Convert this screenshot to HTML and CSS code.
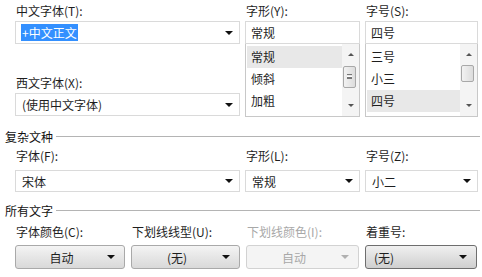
FILE: index.html
```html
<!DOCTYPE html>
<html lang="zh-CN">
<head>
  <meta charset="utf-8">
  <title>字体</title>
  <link rel="stylesheet" href="styles.css">
</head>
<body>
  <div class="dlg">
    <div class="top">
      <div class="col">
        <div class="lbl">中文字体(T):</div>
        <div class="combo"><span class="sel">+中文正文</span><i class="arr"></i></div>
        <div class="lbl gap">西文字体(X):</div>
        <div class="combo"><span>(使用中文字体)</span><i class="arr"></i></div>
      </div>
      <div class="col">
        <div class="lbl">字形(Y):</div>
        <div class="text">常规</div>
        <div class="list">
          <div class="items">
            <div class="item on">常规</div>
            <div class="item">倾斜</div>
            <div class="item">加粗</div>
          </div>
          <div class="sbar">
            <i class="up"></i>
            <div class="thumb t1"><b></b></div>
            <i class="dn"></i>
          </div>
        </div>
      </div>
      <div class="col">
        <div class="lbl">字号(S):</div>
        <div class="text">四号</div>
        <div class="list">
          <div class="items">
            <div class="item">三号</div>
            <div class="item">小三</div>
            <div class="item on">四号</div>
          </div>
          <div class="sbar">
            <i class="up"></i>
            <div class="thumb t2"></div>
            <i class="dn"></i>
          </div>
        </div>
      </div>
    </div>

    <div class="sect">复杂文种</div>
    <div class="row">
      <div class="col">
        <div class="lbl">字体(F):</div>
        <div class="combo short"><span>宋体</span><i class="arr"></i></div>
      </div>
      <div class="col">
        <div class="lbl">字形(L):</div>
        <div class="combo short"><span>常规</span><i class="arr"></i></div>
      </div>
      <div class="col">
        <div class="lbl">字号(Z):</div>
        <div class="combo short"><span>小二</span><i class="arr"></i></div>
      </div>
    </div>

    <div class="sect s2">所有文字</div>
    <div class="btns">
      <div class="col">
        <div class="lbl">字体颜色(C):</div>
        <div class="btn"><span>自动</span><i class="arr"></i></div>
      </div>
      <div class="col">
        <div class="lbl">下划线线型(U):</div>
        <div class="btn"><span>(无)</span><i class="arr"></i></div>
      </div>
      <div class="col">
        <div class="lbl off">下划线颜色(I):</div>
        <div class="btn dis"><span>自动</span><i class="arr"></i></div>
      </div>
      <div class="col">
        <div class="lbl">着重号:</div>
        <div class="btn hot"><span>(无)</span><i class="arr"></i></div>
      </div>
    </div>
  </div>
</body>
</html>
```

FILE: styles.css
```css
body {
  margin: 0;
  background: #fff;
  font-family: "Noto Sans CJK SC", "Liberation Sans", sans-serif;
  font-size: 12px;
  color: #1e1e1e;
}
.dlg {
  width: 482px;
  height: 277px;
  overflow: hidden;
}
.top {
  display: grid;
  grid-template-columns: 225px 115px 113px;
  column-gap: 5px;
  padding-left: 15px;
}
.col {
  display: flex;
  flex-direction: column;
}
.lbl {
  height: 21px;
  line-height: 21px;
  padding-left: 1px;
  white-space: nowrap;
}
.lbl.gap {
  margin-top: 28px;
}
.lbl.off {
  color: #a8a8a8;
}
.combo {
  height: 23px;
  box-sizing: border-box;
  border: 1px solid #dadada;
  background: #fff;
  display: flex;
  align-items: center;
  justify-content: space-between;
  padding: 0 6px 0 6px;
}
.combo.short {
  height: 22px;
}
.combo .sel {
  background: #3390ff;
  color: #fff;
  line-height: 17px;
  padding: 0 1px;
  margin-left: -1px;
}
.arr {
  width: 0;
  height: 0;
  border-left: 4px solid transparent;
  border-right: 4px solid transparent;
  border-top: 4px solid #111;
}
.text {
  height: 23px;
  box-sizing: border-box;
  border: 1px solid #dadada;
  line-height: 21px;
  padding-left: 5px;
}
.list {
  height: 73px;
  box-sizing: border-box;
  border: 1px solid #c8c8c8;
  border-top: 0;
  display: flex;
}
.items {
  flex: 1;
  padding-top: 2px;
}
.item {
  height: 22px;
  line-height: 22px;
  padding-left: 4px;
  margin-left: 1px;
}
.item.on {
  background: #e8e8e8;
}
.sbar {
  width: 17px;
  background: #f4f4f4;
  display: flex;
  flex-direction: column;
  align-items: center;
  position: relative;
}
.sbar .up, .sbar .dn {
  width: 0;
  height: 0;
  border-left: 3px solid transparent;
  border-right: 3px solid transparent;
}
.sbar .up {
  border-bottom: 3px solid #555;
  margin-top: 9px;
}
.sbar .dn {
  border-top: 3px solid #555;
  margin-top: auto;
  margin-bottom: 9px;
}
.thumb {
  position: absolute;
  left: 1px;
  width: 13px;
  box-sizing: border-box;
  border: 1px solid #a8a8a8;
  border-radius: 2px;
  background: linear-gradient(to right, #f2f2f2, #dcdcdc);
}
.thumb.t1 {
  top: 22px;
  height: 22px;
}
.thumb.t1 b {
  display: block;
  width: 5px;
  height: 5px;
  margin: 7px auto 0;
  border-top: 1px solid #777;
  border-bottom: 1px solid #777;
  box-sizing: border-box;
  background: linear-gradient(#fff 1px, #777 1px, #777 2px, transparent 2px) 0 1px no-repeat;
}
.thumb.t2 {
  top: 21px;
  height: 17px;
}
.sect {
  display: flex;
  align-items: center;
  height: 20px;
  margin-top: 9px;
  padding-left: 5px;
  color: #111;
}
.sect::after {
  content: "";
  flex: 1;
  height: 1px;
  background: #b4b4b4;
  margin-left: 3px;
  margin-right: 2px;
}
.s2 {
  margin-top: 8px;
}
.row {
  display: grid;
  grid-template-columns: 225px 115px 113px;
  column-gap: 5px;
  padding-left: 15px;
}
.row .lbl {
  height: 24px;
  line-height: 20px;
}
.btns {
  display: grid;
  grid-template-columns: 110px 109px 113px 112px;
  column-gap: 6px;
  padding-left: 15px;
}
.btns .lbl {
  height: 25px;
  line-height: 24px;
}
.btn {
  height: 24px;
  box-sizing: border-box;
  border: 1px solid #a9a9a9;
  border-radius: 3px;
  background: linear-gradient(#f4f4f4, #e6e6e6 50%, #d9d9d9);
  display: flex;
  align-items: center;
  padding: 0 9px 0 0;
  position: relative;
}
.btn span {
  flex: 1;
  text-align: center;
}
.btn.dis {
  border-color: #d2d2d2;
  background: #f4f4f4;
  color: #a8a8a8;
}
.btn.dis .arr {
  border-top-color: #b0b0b0;
}
.btn.hot {
  border-color: #6e6e6e;
  background: linear-gradient(#f0f0f0, #e0e0e0 50%, #cfcfcf);
}
.btn.hot span {
  text-align: left;
  padding-left: 8px;
}
```
